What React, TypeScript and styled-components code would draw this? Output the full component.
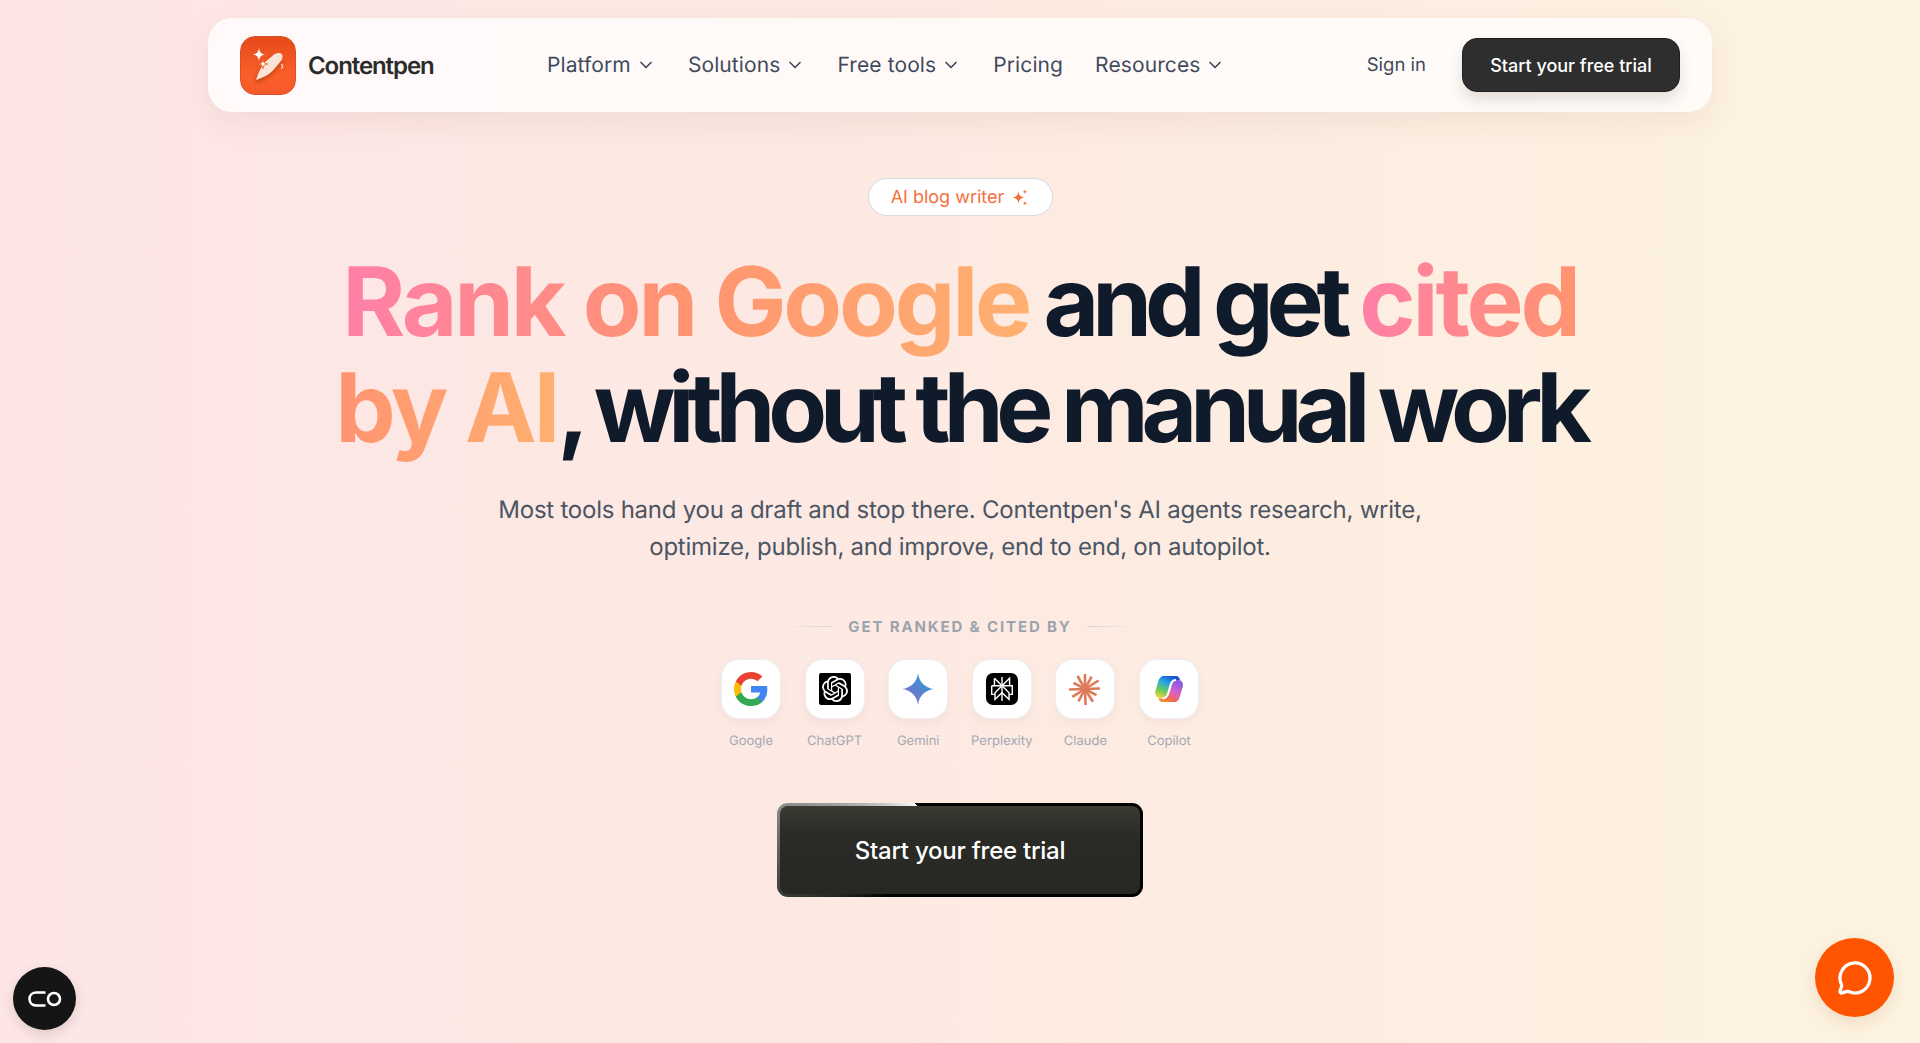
import React from 'react'
import styled, { createGlobalStyle } from 'styled-components'
import { ChevronDown, MessageCircle } from 'lucide-react'
import { SiOpenai } from 'react-icons/si'

const GlobalStyle = createGlobalStyle`
  html, body {
    margin: 0;
    padding: 0;
  }
  body {
    font-family: Inter, 'Liberation Sans', sans-serif;
    text-rendering: geometricPrecision;
    overflow: hidden;
  }
`

const navItems = [
  { label: 'Platform', menu: true },
  { label: 'Solutions', menu: true },
  { label: 'Free tools', menu: true },
  { label: 'Pricing', menu: false },
  { label: 'Resources', menu: true }
]

const GoogleIcon = () => (
  <svg width='34' height='34' viewBox='1 1 22 22'>
    <path fill='#4285F4' d='M22.56 12.25c0-.78-.07-1.53-.2-2.25H12v4.26h5.92c-.26 1.37-1.04 2.53-2.21 3.31v2.77h3.57c2.08-1.92 3.28-4.74 3.28-8.09z' />
    <path fill='#34A853' d='M12 23c2.97 0 5.46-.98 7.28-2.66l-3.57-2.77c-.98.66-2.23 1.06-3.71 1.06-2.86 0-5.29-1.93-6.16-4.53H2.18v2.84C3.99 20.53 7.7 23 12 23z' />
    <path fill='#FBBC05' d='M5.84 14.09c-.22-.66-.35-1.36-.35-2.09s.13-1.43.35-2.09V7.07H2.18C1.43 8.55 1 10.22 1 12s.43 3.45 1.18 4.93l2.85-2.22.81-.62z' />
    <path fill='#EA4335' d='M12 5.38c1.62 0 3.06.56 4.21 1.64l3.15-3.15C17.45 2.09 14.97 1 12 1 7.7 1 3.99 3.47 2.18 7.07l3.66 2.84c.87-2.6 3.3-4.53 6.16-4.53z' />
  </svg>
)

const ChatGptIcon = () => (
  <BlackSquare $radius={2}>
    <SiOpenai size={26} />
  </BlackSquare>
)

const GeminiIcon = () => (
  <svg width='32' height='32' viewBox='0 0 32 32'>
    <defs>
      <linearGradient id='gem' x1='0' y1='1' x2='1' y2='0'>
        <stop offset='0' stopColor='#9168c0' />
        <stop offset='0.5' stopColor='#5684d1' />
        <stop offset='1' stopColor='#1ba1e3' />
      </linearGradient>
    </defs>
    <path fill='url(#gem)' d='M16 0C17 9 23 15 32 16C23 17 17 23 16 32C15 23 9 17 0 16C9 15 15 9 16 0Z' />
  </svg>
)

const PerplexityIcon = () => (
  <BlackSquare $radius={7}>
    <svg width='26' height='26' viewBox='0 0 24 24' fill='none' stroke='#fff' strokeWidth='1.3'>
      <path d='M12 1V23' />
      <path d='M5 2L12 9L19 2V9M5 2V9' />
      <path d='M2.5 9H21.5V17H18.5M2.5 9V17H5.5' />
      <path d='M12 9L5.5 15.5V21.5L12 15.5L18.5 21.5V15.5L12 9Z' />
    </svg>
  </BlackSquare>
)

const ClaudeIcon = () => {
  const rays = [
    [0, 15], [28, 14], [58, 16], [88, 15], [118, 13], [148, 15],
    [178, 16], [208, 14], [238, 15], [268, 16], [298, 13], [330, 15]
  ]
  return (
    <svg width='32' height='32' viewBox='-16 -16 32 32'>
      {rays.map(([angle, length]) => (
        <line
          key={angle}
          x1='0'
          y1='0'
          x2='0'
          y2={-length}
          stroke='#dd7a58'
          strokeWidth='2.6'
          transform={`rotate(${angle})`}
        />
      ))}
    </svg>
  )
}

const CopilotIcon = () => (
  <svg width='32' height='32' viewBox='0 0 32 32'>
    <defs>
      <linearGradient id='copA' x1='0.7' y1='0' x2='0.2' y2='1'>
        <stop offset='0' stopColor='#1b4fd0' />
        <stop offset='0.35' stopColor='#24a6e0' />
        <stop offset='0.7' stopColor='#6bcb5c' />
        <stop offset='1' stopColor='#f6d33c' />
      </linearGradient>
      <linearGradient id='copB' x1='0.8' y1='0.1' x2='0.3' y2='1'>
        <stop offset='0' stopColor='#8a5be0' />
        <stop offset='0.45' stopColor='#d763c8' />
        <stop offset='0.8' stopColor='#f4684c' />
        <stop offset='1' stopColor='#f58a2e' />
      </linearGradient>
    </defs>
    <path fill='url(#copB)' d='M22 29H9.5C7.5 29 6 27.5 5.5 25.5H9C11.5 25.5 13.5 24 14.2 21.5L17.5 11C18.2 8.5 20 7 22.5 7H25.5C29 7 30.5 10 29.8 13.5L27 23C26 26.5 24.5 29 22 29Z' />
    <path fill='url(#copA)' d='M10 3H23C25 3 26.5 4.5 27 7H23C20.5 7 19 8.5 18.5 10.5L15.5 20C14.5 23 12.5 25 10 25H7C3.5 25 1.5 22 2.3 18.5L5 9C6 5.5 8 3 10 3Z' />
    <path fill='none' stroke='#fff' strokeWidth='2.2' d='M23 7C20.3 7 18.8 8.5 18 11L15 21C14.2 23.5 12.5 25.3 9.5 25.3' />
  </svg>
)

const engines = [
  { name: 'Google', Icon: GoogleIcon },
  { name: 'ChatGPT', Icon: ChatGptIcon },
  { name: 'Gemini', Icon: GeminiIcon },
  { name: 'Perplexity', Icon: PerplexityIcon },
  { name: 'Claude', Icon: ClaudeIcon },
  { name: 'Copilot', Icon: CopilotIcon }
]

const LogoGlyph = () => (
  <svg width='40' height='40' viewBox='0 0 40 40'>
    <PenBody d='M8 35C10 28 13 22 17 17L26 9.5C29 7.5 33 7.5 34 9.5C35 11.5 34.5 14 33 16L25 25.5C21 30 14 33 8 35Z' />
    <path fill='none' stroke='#fde3d6' strokeWidth='1.2' d='M33 19C35 20 35 22 33.5 23.5' />
    <path fill='#fff' d='M11 3C11.6 7 13 8.9 17 9.5C13 10.1 11.6 12 11 16C10.4 12 9 10.1 5 9.5C9 8.9 10.4 7 11 3Z' />
    <path fill='#fff' stroke='#f1602c' strokeWidth='1' d='M15 14.5C15.4 17.5 16.5 18.6 19.5 19C16.5 19.4 15.4 20.5 15 23.5C14.6 20.5 13.5 19.4 10.5 19C13.5 18.6 14.6 17.5 15 14.5Z' />
  </svg>
)

const SparkGlyph = () => (
  <svg width='17' height='17' viewBox='0 0 17 17' fill='#f4703c'>
    <path d='M6.5 2.5C7.2 6.3 8.5 7.8 12.5 8.5C8.5 9.2 7.2 10.7 6.5 14.5C5.8 10.7 4.5 9.2 0.5 8.5C4.5 7.8 5.8 6.3 6.5 2.5Z' />
    <path d='M13 0.5C13.3 2 13.8 2.5 15.3 2.8C13.8 3.1 13.3 3.6 13 5.1C12.7 3.6 12.2 3.1 10.7 2.8C12.2 2.5 12.7 2 13 0.5Z' />
    <path d='M13 12C13.3 13.4 13.8 13.9 15.2 14.2C13.8 14.5 13.3 15 13 16.4C12.7 15 12.2 14.5 10.8 14.2C12.2 13.9 12.7 13.4 13 12Z' />
  </svg>
)

const App = () => {
  return (
    <Page>
      <GlobalStyle />
      <NavBar>
        <Brand>
          <LogoBox>
            <LogoGlyph />
          </LogoBox>
          <BrandName>Contentpen</BrandName>
        </Brand>
        <NavLinks>
          {navItems.map((item) => (
            <NavLink key={item.label}>
              {item.label}
              {item.menu && <ChevronDown size={20} strokeWidth={2} />}
            </NavLink>
          ))}
        </NavLinks>
        <NavRight>
          <SignIn>Sign in</SignIn>
          <NavButton>Start your free trial</NavButton>
        </NavRight>
      </NavBar>

      <Hero>
        <Badge>
          AI blog writer
          <SparkGlyph />
        </Badge>
        <Headline>
          <Gradient>Rank on Google</Gradient> and get <Gradient>cited<br />by AI</Gradient>, without the manual work
        </Headline>
        <Lead>
          Most tools hand you a draft and stop there. Contentpen's AI agents research, write,
          <br />
          optimize, publish, and improve, end to end, on autopilot.
        </Lead>
        <RankedRow>
          <FadeLine />
          <RankedLabel>GET RANKED &amp; CITED BY</RankedLabel>
          <FadeLine $flip />
        </RankedRow>
        <EngineRow>
          {engines.map(({ name, Icon }) => (
            <Engine key={name}>
              <EngineTile>
                <Icon />
              </EngineTile>
              <EngineName>{name}</EngineName>
            </Engine>
          ))}
        </EngineRow>
        <CtaButton>Start your free trial</CtaButton>
      </Hero>

      <CoBadge>
        <svg width='34' height='16' viewBox='0 0 34 16' fill='none' stroke='#fff' strokeWidth='2.6'>
          <path d='M17.5 1.5H8.5C4.5 1.5 1.5 4.2 1.5 8C1.5 11.8 4.5 14.5 8.5 14.5H17.5' />
          <circle cx='26' cy='8' r='6' />
        </svg>
      </CoBadge>
      <ChatBubble>
        <MessageCircle size={36} strokeWidth={2.2} color='#fff' />
      </ChatBubble>
    </Page>
  )
}

export default App

const Page = styled.div`
  min-height: 1043px;
  box-sizing: border-box;
  padding-top: 18px;
  background: linear-gradient(90deg, #fde5e6 0%, #fdeae2 50%, #fdf3e0 100%);
`
const NavBar = styled.header`
  width: 1504px;
  height: 94px;
  margin: 0 auto;
  padding: 0 32px;
  box-sizing: border-box;
  display: flex;
  align-items: center;
  border-radius: 24px;
  background: rgba(255, 255, 255, 0.76);
  box-shadow: 0 10px 30px rgba(90, 50, 30, 0.07);
`
const Brand = styled.div`
  display: flex;
  align-items: center;
  gap: 12px;
  width: 307px;
`
const LogoBox = styled.div`
  width: 56px;
  height: 59px;
  box-sizing: border-box;
  border-radius: 15px;
  border: 1px solid #d9502c;
  background: linear-gradient(180deg, #e64a19 0%, #fb5f29 70%, #f4592a 100%);
  display: flex;
  align-items: center;
  justify-content: center;
`
const PenBody = styled.path`
  fill: #fde3d6;
  filter: drop-shadow(-1px 3px 2px rgba(120, 30, 0, 0.45));
`
const BrandName = styled.span`
  font-size: 24px;
  font-weight: 600;
  letter-spacing: -0.045em;
  color: #2b2b2b;
`
const NavLinks = styled.nav`
  display: flex;
  align-items: center;
  gap: 32px;
`
const NavLink = styled.a`
  display: flex;
  align-items: center;
  gap: 5px;
  font-size: 21px;
  letter-spacing: 0.005em;
  color: #414a5c;
`
const NavRight = styled.div`
  margin-left: auto;
  display: flex;
  align-items: center;
  gap: 36px;
`
const SignIn = styled.a`
  font-size: 18.5px;
  color: #414a5c;
`
const NavButton = styled.button`
  width: 218px;
  height: 54px;
  border: 1px solid #1f1f1f;
  border-radius: 15px;
  background: #2e2e2e;
  color: #fff;
  font-family: inherit;
  font-size: 18px;
  font-weight: 500;
  box-shadow: 0 8px 14px rgba(60, 40, 30, 0.14);
`
const Hero = styled.main`
  display: flex;
  flex-direction: column;
  align-items: center;
  padding-top: 66px;
`
const Badge = styled.div`
  height: 38px;
  width: 185px;
  box-sizing: border-box;
  display: flex;
  align-items: center;
  justify-content: center;
  gap: 8px;
  border: 1px solid #d6dae3;
  border-radius: 19px;
  background: #fff;
  color: #f4703c;
  font-size: 18px;
`
const Headline = styled.h1`
  margin: 33px 0 0;
  width: 1400px;
  text-align: center;
  font-size: 96px;
  line-height: 106px;
  font-weight: 700;
  letter-spacing: -7.1px;
  word-spacing: -1px;
  color: #0f1a2b;
`
const Gradient = styled.span`
  letter-spacing: -3.2px;
  word-spacing: 0;
  background: linear-gradient(90deg, #ff7fa8 0%, #ff9470 50%, #ffb070 100%);
  -webkit-background-clip: text;
  background-clip: text;
  color: transparent;
`
const Lead = styled.p`
  margin: 30px 0 0;
  text-align: center;
  font-size: 24px;
  letter-spacing: -0.01em;
  line-height: 37px;
  color: #4b5563;
`
const RankedRow = styled.div`
  margin-top: 52px;
  display: flex;
  align-items: center;
  gap: 15px;
`
const FadeLine = styled.span<{ $flip?: boolean }>`
  width: 50px;
  height: 1px;
  background: linear-gradient(${(p) => (p.$flip ? '270deg' : '90deg')}, transparent, #cfd4dc);
`
const RankedLabel = styled.span`
  font-size: 15px;
  font-weight: 700;
  letter-spacing: 0.125em;
  color: #9ca3af;
`
const EngineRow = styled.div`
  margin-top: 23px;
  display: flex;
  gap: 23.6px;
`
const Engine = styled.div`
  width: 60px;
  display: flex;
  flex-direction: column;
  align-items: center;
  gap: 14px;
`
const EngineTile = styled.div`
  width: 60px;
  height: 60px;
  box-sizing: border-box;
  border: 1px solid #eceff3;
  border-radius: 18px;
  background: #fff;
  display: flex;
  align-items: center;
  justify-content: center;
  box-shadow: 0 4px 10px rgba(120, 80, 60, 0.06);
`
const BlackSquare = styled.div<{ $radius: number }>`
  width: 32px;
  height: 32px;
  border-radius: ${(p) => p.$radius}px;
  background: #000;
  color: #fff;
  display: flex;
  align-items: center;
  justify-content: center;
`
const EngineName = styled.span`
  font-size: 13px;
  line-height: 16px;
  white-space: nowrap;
  color: #a2a8b3;
`
const CtaButton = styled.button`
  margin-top: 54px;
  width: 366px;
  height: 94px;
  border: 3px solid transparent;
  border-radius: 11px;
  background:
    linear-gradient(180deg, #3b3a33 0%, #2a2a26 35%, #272723 100%) padding-box,
    conic-gradient(#000 0deg, #000 238deg, #3a3a3a 256deg, #8a8a8a 284deg, #fff 316deg, #000 316deg) border-box;
  color: #fff;
  font-family: inherit;
  font-size: 24px;
  font-weight: 500;
  letter-spacing: -0.24px;
`
const CoBadge = styled.div`
  position: fixed;
  left: 13px;
  top: 967px;
  width: 63px;
  height: 63px;
  border-radius: 50%;
  background: #151515;
  display: flex;
  align-items: center;
  justify-content: center;
  box-shadow: 0 4px 12px rgba(0, 0, 0, 0.12);
`
const ChatBubble = styled.div`
  position: fixed;
  left: 1815px;
  top: 938px;
  width: 79px;
  height: 79px;
  border-radius: 50%;
  background: #ff5500;
  display: flex;
  align-items: center;
  justify-content: center;
  box-shadow: 0 6px 16px rgba(120, 70, 20, 0.12);
`
